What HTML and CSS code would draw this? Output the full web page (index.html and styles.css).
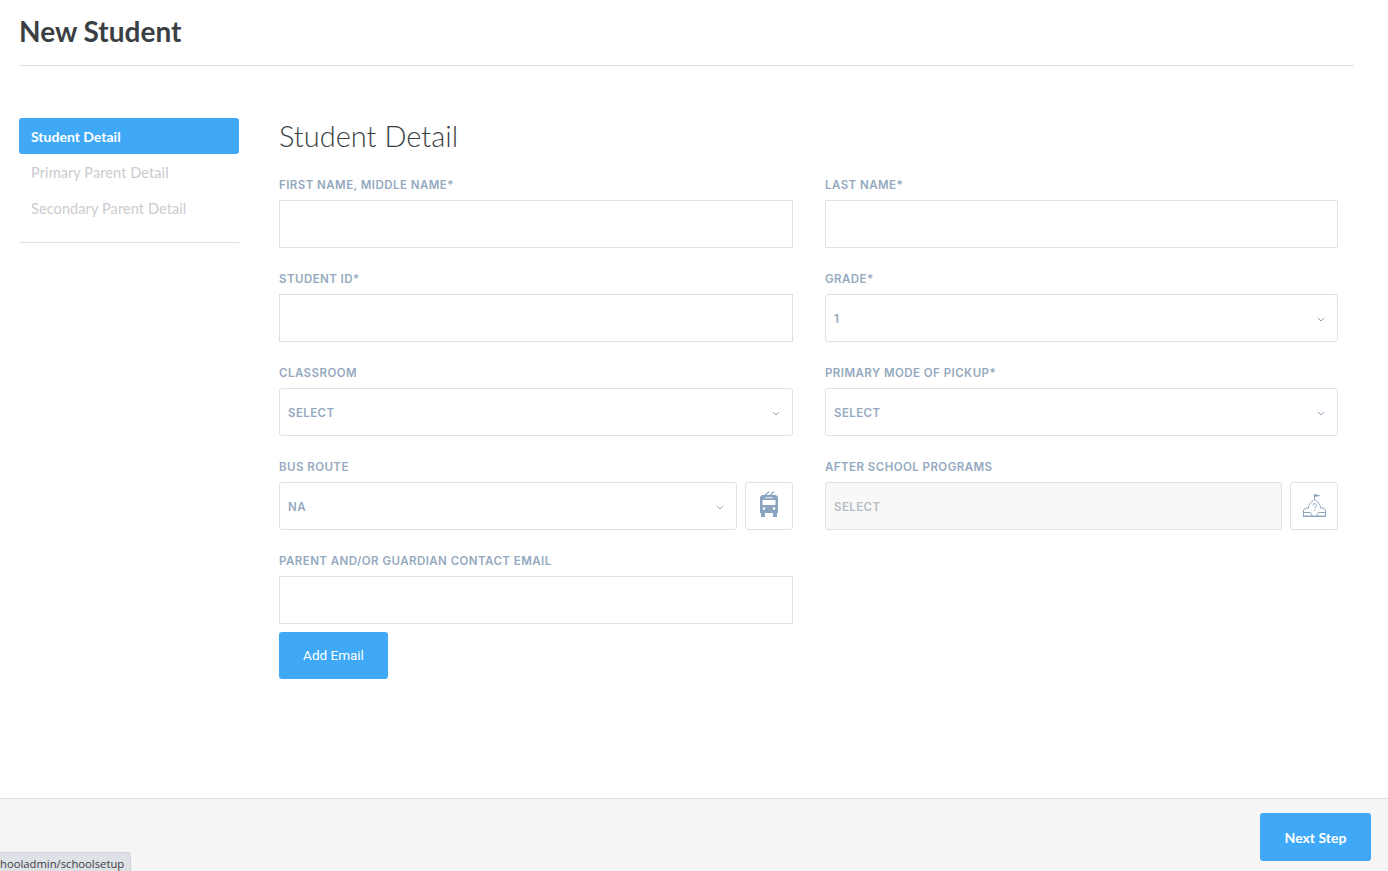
FILE: index.html
```html
<!DOCTYPE html>
<html lang="en">
<head>
    <meta charset="UTF-8">
    <title>New Student</title>
    <link rel="stylesheet" href="styles.css">
</head>
<body>
    <div class="page">
        <h1 class="page-title">New Student</h1>

        <div class="layout">
            <div class="steps">
                <a class="step active">Student Detail</a>
                <a class="step">Primary Parent Detail</a>
                <a class="step">Secondary Parent Detail</a>
            </div>

            <form class="detail">
                <h2>Student Detail</h2>
                <div class="fields">
                    <div class="field">
                        <label>FIRST NAME, MIDDLE NAME*</label>
                        <input type="text">
                    </div>
                    <div class="field">
                        <label>LAST NAME*</label>
                        <input type="text">
                    </div>
                    <div class="field">
                        <label>STUDENT ID*</label>
                        <input type="text">
                    </div>
                    <div class="field">
                        <label>GRADE*</label>
                        <div class="select"><span>1</span><svg class="caret" viewBox="0 0 8 5"><path d="M.8.8 4 4l3.200-3.200"/></svg></div>
                    </div>
                    <div class="field">
                        <label>CLASSROOM</label>
                        <div class="select"><span>SELECT</span><svg class="caret" viewBox="0 0 8 5"><path d="M.8.8 4 4l3.200-3.200"/></svg></div>
                    </div>
                    <div class="field">
                        <label>PRIMARY MODE OF PICKUP*</label>
                        <div class="select"><span>SELECT</span><svg class="caret" viewBox="0 0 8 5"><path d="M.8.8 4 4l3.200-3.200"/></svg></div>
                    </div>
                    <div class="field">
                        <label>BUS ROUTE</label>
                        <div class="with-icon">
                            <div class="select"><span>NA</span><svg class="caret" viewBox="0 0 8 5"><path d="M.8.8 4 4l3.200-3.200"/></svg></div>
                            <div class="icon-box">
                                <svg class="bus-icon" width="20" height="26" viewBox="0 0 20 26">
                                    <path fill="none" stroke="#8aa4bf" stroke-width="1.200" d="M6 4.500 10 .5M11 4.500l4-4"/>
                                    <path fill="#8aa4bf" d="M3.500 4h13A3 3 0 0 1 19 7v15H1V7a3 3 0 0 1 2.500-3zM2 22h4v4H2zM14 22h4v4h-4z"/>
                                    <path fill="#fff" d="M3.500 9h13v5h-13z"/>
                                    <path fill="#d5dfe9" d="M6 6h8v1.300H6z"/>
                                    <circle fill="#fff" cx="5" cy="17.500" r="1.300"/>
                                    <circle fill="#fff" cx="15" cy="17.500" r="1.300"/>
                                </svg>
                            </div>
                        </div>
                    </div>
                    <div class="field">
                        <label>AFTER SCHOOL PROGRAMS</label>
                        <div class="with-icon">
                            <div class="select disabled"><span>SELECT</span></div>
                            <div class="icon-box">
                                <svg class="school-icon" width="26" height="26" viewBox="0 0 26 26" fill="none" stroke="#8aa4bf">
                                    <path d="M13.500 7.500V2"/>
                                    <path fill="#8aa4bf" stroke="none" d="M13.500 2 20 3.800l-6.500 1.200z"/>
                                    <path d="M7.500 16c0-4 3-6 6-8.500 3 2.500 6 4.500 6 8.500"/>
                                    <path d="M7.500 16H5l-2.500 2v6M19.500 16H22l2.500 2v6"/>
                                    <path d="M2.500 20.500H9c1 0 1.500 1 2 3.500M24.500 20.500H18c-1 0-1.500 1-2 3.500"/>
                                    <path d="M11.800 13.500a1.800 1.800 0 1 1 2.800 1.500c-.7.400-1 .8-1 1.600M13.600 18v.8"/>
                                    <path stroke-width="1.400" d="M2 24.300h23"/>
                                </svg>
                            </div>
                        </div>
                    </div>
                    <div class="field">
                        <label>PARENT AND/OR GUARDIAN CONTACT EMAIL</label>
                        <input type="text">
                        <button type="button" class="btn add-email">Add Email</button>
                    </div>
                </div>
            </form>
        </div>
    </div>

    <div class="footer">
        <button type="button" class="btn next">Next Step</button>
    </div>
    <div class="status"><span>hooladmin/schoolsetup</span></div>
</body>
</html>
```

FILE: styles.css
```css
html, body {
    height: 100%;
}

body {
    font-family: "Open Sans", sans-serif;
    margin: 0;
    background-color: #fff;
    color: #3a3f44;
    overflow: hidden;
}

.page {
    height: 798px;
    box-sizing: border-box;
    padding: 0 34px 0 19px;
}

.page-title {
    margin: 0;
    height: 66px;
    box-sizing: border-box;
    padding-top: 13px;
    font-family: Lato, sans-serif;
    font-size: 28px;
    line-height: 36px;
    font-weight: 700;
    border-bottom: 1px solid #dfe0e6;
}

.layout {
    display: flex;
    margin-top: 52px;
}

.steps {
    width: 220px;
    height: 124px;
    flex-shrink: 0;
    border-bottom: 1px solid #dfe0e6;
}

.step {
    display: block;
    height: 36px;
    padding-left: 12px;
    font-family: Lato, sans-serif;
    font-size: 14.500px;
    line-height: 38px;
    letter-spacing: 0.1px;
    color: #cacccf;
}

.step.active {
    background-color: #40a9f7;
    color: #fff;
    font-size: 14px;
    font-weight: 700;
    letter-spacing: 0;
    border-radius: 3px;
}

.detail {
    flex: 1;
    margin-left: 40px;
    padding-right: 16px;
}

.detail h2 {
    margin: 0;
    font-family: Lato, sans-serif;
    font-weight: 300;
    font-size: 29px;
    line-height: 36px;
}

.fields {
    display: grid;
    grid-template-columns: 514px 513px;
    column-gap: 32px;
    margin-top: 12px;
}

.field {
    height: 94px;
}

label {
    display: block;
    font-family: Inter, sans-serif;
    font-size: 11.500px;
    font-weight: 600;
    line-height: 14px;
    letter-spacing: 0.45px;
    color: #94a9c0;
    margin-top: 12px;
    margin-bottom: 8px;
}

input[type="text"], .select {
    display: block;
    width: 100%;
    height: 48px;
    box-sizing: border-box;
    border: 1px solid #dfe0e8;
    background-color: #fff;
}

.select {
    display: flex;
    align-items: center;
    justify-content: space-between;
    padding: 2px 12px 0 8px;
    border-radius: 3px;
    font-family: Inter, sans-serif;
    font-size: 11.500px;
    font-weight: 600;
    letter-spacing: 0.4px;
    color: #94a9c0;
}

.select.disabled {
    background-color: #f8f8f8;
    color: #b5bcc4;
}

.caret {
    width: 8px;
    height: 5px;
    fill: none;
    stroke: #8aa4bf;
    stroke-width: 1;
}

.with-icon {
    display: flex;
    gap: 8px;
}

.with-icon .select {
    flex: 1;
    width: auto;
}

.icon-box {
    width: 48px;
    height: 48px;
    box-sizing: border-box;
    flex-shrink: 0;
    border: 1px solid #dfe0e8;
    border-radius: 3px;
    display: flex;
    align-items: center;
    justify-content: center;
}

.bus-icon {
    margin-bottom: 4px;
}

.school-icon {
    margin-bottom: 2px;
}

.btn {
    border: none;
    border-radius: 3px;
    background-color: #40a9f7;
    color: #fff;
    font-family: Roboto, sans-serif;
    font-size: 13.500px;
    cursor: pointer;
}

.add-email {
    display: block;
    width: 109px;
    height: 47px;
    margin-top: 8px;
    padding-bottom: 3px;
}

.footer {
    height: 73px;
    box-sizing: border-box;
    background-color: #f5f5f6;
    border-top: 1px solid #dfe0e6;
    display: flex;
    justify-content: flex-end;
    padding: 14px 17px 0 0;
}

.next {
    width: 111px;
    height: 48px;
    font-family: Lato, sans-serif;
    font-size: 14px;
    font-weight: 700;
}

.status {
    position: fixed;
    left: 0;
    bottom: 0;
    width: 131px;
    height: 19px;
    box-sizing: border-box;
    background-color: #dee1e6;
    border: 1px solid #cfd2d7;
    border-left: none;
    border-bottom: none;
    border-top-right-radius: 4px;
    font-family: "Open Sans", sans-serif;
    font-size: 11.250px;
    line-height: 22px;
    color: #3c4043;
    text-align: right;
    padding-right: 6px;
    white-space: nowrap;
    overflow: hidden;
}
```
